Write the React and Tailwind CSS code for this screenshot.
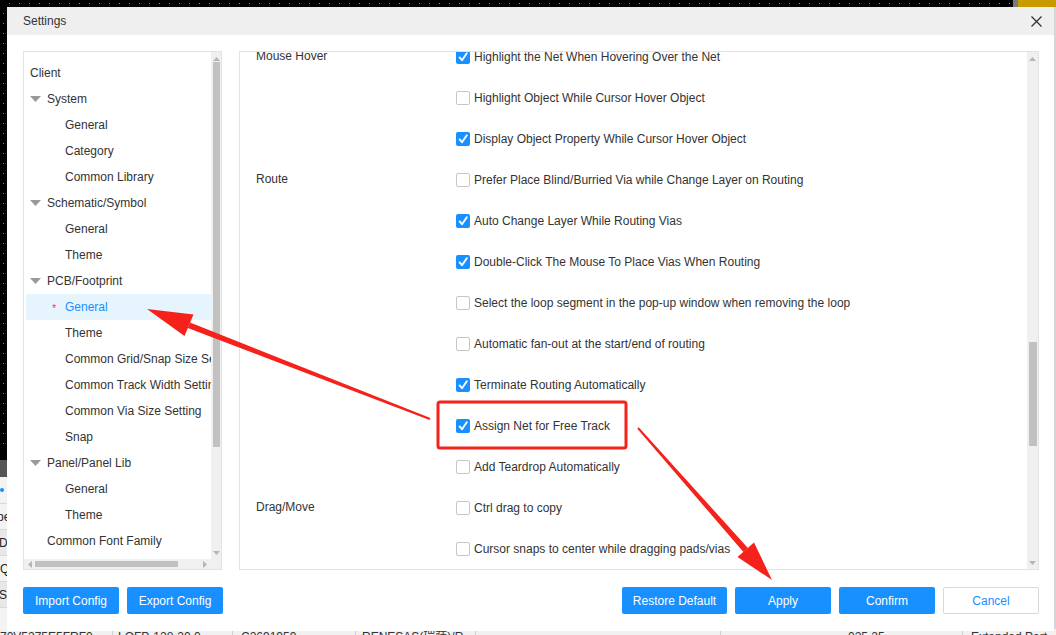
import React from 'react';

const tree = [
  { t: 'Client', kind: 'root' },
  { t: 'System', kind: 'group' },
  { t: 'General', kind: 'leaf' },
  { t: 'Category', kind: 'leaf' },
  { t: 'Common Library', kind: 'leaf' },
  { t: 'Schematic/Symbol', kind: 'group' },
  { t: 'General', kind: 'leaf' },
  { t: 'Theme', kind: 'leaf' },
  { t: 'PCB/Footprint', kind: 'group' },
  { t: 'General', kind: 'leaf', active: true },
  { t: 'Theme', kind: 'leaf' },
  { t: 'Common Grid/Snap Size Setting', kind: 'leaf' },
  { t: 'Common Track Width Setting', kind: 'leaf' },
  { t: 'Common Via Size Setting', kind: 'leaf' },
  { t: 'Snap', kind: 'leaf' },
  { t: 'Panel/Panel Lib', kind: 'group' },
  { t: 'General', kind: 'leaf' },
  { t: 'Theme', kind: 'leaf' },
  { t: 'Common Font Family', kind: 'flat' },
];

const options = [
  { label: 'Mouse Hover', text: 'Highlight the Net When Hovering Over the Net', on: true },
  { text: 'Highlight Object While Cursor Hover Object', on: false },
  { text: 'Display Object Property While Cursor Hover Object', on: true },
  { label: 'Route', text: 'Prefer Place Blind/Burried Via while Change Layer on Routing', on: false },
  { text: 'Auto Change Layer While Routing Vias', on: true },
  { text: 'Double-Click The Mouse To Place Vias When Routing', on: true },
  { text: 'Select the loop segment in the pop-up window when removing the loop', on: false },
  { text: 'Automatic fan-out at the start/end of routing', on: false },
  { text: 'Terminate Routing Automatically', on: true },
  { text: 'Assign Net for Free Track', on: true },
  { text: 'Add Teardrop Automatically', on: false },
  { label: 'Drag/Move', text: 'Ctrl drag to copy', on: false },
  { text: 'Cursor snaps to center while dragging pads/vias', on: false },
];

const Caret = () => (
  <svg width="11" height="6" viewBox="0 0 11 6" className="shrink-0">
    <polygon points="0,0 11,0 5.5,6" fill="#9a9a9a" />
  </svg>
);

const Arrow = ({ dir }) => {
  const pts = {
    up: '0,4 3.5,0 7,4',
    down: '0,0 7,0 3.5,4',
    left: '4,0 4,7 0,3.5',
    right: '0,0 0,7 4,3.5',
  }[dir];
  const w = dir === 'up' || dir === 'down' ? 7 : 4;
  const h = dir === 'up' || dir === 'down' ? 4 : 7;
  return (
    <svg width={w} height={h} viewBox={`0 0 ${w} ${h}`} className="shrink-0">
      <polygon points={pts} fill="#b5b5b5" />
    </svg>
  );
};

function CheckBox({ on }) {
  if (!on) {
    return <span className="w-[14px] h-[14px] rounded-[2px] border border-[#c6c6c6] bg-white shrink-0" />;
  }
  return (
    <span className="w-[14px] h-[14px] rounded-[2px] bg-[#1890ff] flex items-center justify-center shrink-0">
      <svg width="10" height="10" viewBox="0 0 10 10">
        <path d="M1.6 5.4 L4 8.2 L8.8 1.2" stroke="#fff" strokeWidth="1.9" fill="none" strokeLinecap="round" strokeLinejoin="round" />
      </svg>
    </span>
  );
}

function TreeRow({ item }) {
  if (item.kind === 'group') {
    return (
      <div className="h-[26px] flex items-center pl-[4px] whitespace-nowrap">
        <Caret />
        <span className="ml-[6px] shrink-0">{item.t}</span>
      </div>
    );
  }
  if (item.kind === 'root') {
    return <div className="h-[26px] flex items-center pl-[4px] whitespace-nowrap">{item.t}</div>;
  }
  if (item.kind === 'flat') {
    return <div className="h-[26px] flex items-center pl-[21px] whitespace-nowrap">{item.t}</div>;
  }
  return (
    <div className={`h-[26px] flex items-center pl-[26px] whitespace-nowrap overflow-hidden ${item.active ? 'bg-[#e6f5fd] text-[#1890ff]' : ''}`}>
      <span className="w-[13px] shrink-0 text-[#ff3b3b] text-[11px] leading-none pt-[3px]">{item.active ? '*' : ''}</span>
      <span className="shrink-0">{item.t}</span>
    </div>
  );
}

function Btn({ children, w = 'w-[96px]', ghost }) {
  return (
    <button
      className={`${w} h-[27px] rounded-[2px] text-[12px] flex items-center justify-center ${
        ghost ? 'bg-white border border-[#d9d9d9] text-[#1890ff]' : 'bg-[#1890ff] text-white'
      }`}
    >
      {children}
    </button>
  );
}

export default function App() {
  return (
    <div className="relative w-[1056px] h-[635px] overflow-hidden bg-white font-['Liberation_Sans','Noto_Sans_CJK_SC',sans-serif] text-[12px] text-[#333]">
      {/* page behind the dialog */}
      <div className="flex flex-col h-full">
        <div className="h-[7px] bg-black flex items-center">
          <div className="flex-1 flex gap-[9px] pl-[9px] overflow-hidden">
            {Array.from({ length: 101 }).map((_, i) => (
              <span key={i} className="w-[1px] h-[1px] bg-[#9a9a9a] shrink-0" />
            ))}
          </div>
          <div className="w-[5px] h-full bg-[#7a7a7a]" />
          <div className="w-[38px] h-full bg-[#c89a00]" />
        </div>
        <div className="flex-1 flex">
          <div className="w-[7px] flex flex-col">
            <div className="h-[453px] bg-black flex flex-col items-center gap-[9px] pt-[6px] overflow-hidden">
              {Array.from({ length: 44 }).map((_, i) => (
                <span key={i} className="w-[1px] h-[1px] bg-[#8a8a8a] shrink-0" />
              ))}
            </div>
            <div className="h-[17px] bg-[#555]" />
            <div className="flex-1 flex flex-col bg-[#f3f3f3] overflow-hidden text-[#222] leading-none">
              <div className="h-[26px] flex items-center"><span className="w-[4px] h-[4px] rounded-full bg-[#1890ff]" /></div>
              <div className="h-[26px] flex items-center border-t border-[#d9d9d9] -ml-[3px]">pe</div>
              <div className="h-[26px] flex items-center border-t border-[#d9d9d9] bg-[#e8e8e8] -ml-[1px]">De</div>
              <div className="h-[26px] flex items-center border-t border-[#d9d9d9]">Q</div>
              <div className="h-[26px] flex items-center border-t border-[#d9d9d9] bg-[#e8e8e8] -ml-[1px]">SI</div>
              <div className="flex-1 border-t border-[#d9d9d9]" />
            </div>
          </div>
          <div className="flex-1" />
          <div className="w-[2px] bg-[#d6d6d6]" />
        </div>
        <div className="h-[6px] flex bg-[#f1f1f1] text-[#333] leading-none overflow-hidden">
          <div className="w-[113px] border-r border-[#cfcfcf] pt-[2px] whitespace-nowrap">70V5275E5FRF0</div>
          <div className="w-[120px] border-r border-[#cfcfcf] pt-[2px] pl-[5px] whitespace-nowrap">LQFP-128-20.0 ...</div>
          <div className="w-[123px] border-r border-[#cfcfcf] pt-[2px] pl-[8px] whitespace-nowrap">C2691959</div>
          <div className="w-[120px] border-r border-[#cfcfcf] pt-[2px] pl-[6px] whitespace-nowrap">RENESAS(瑞萨)/R...</div>
          <div className="w-[245px] border-r border-[#cfcfcf]" />
          <div className="w-[242px] border-r border-[#cfcfcf] pt-[2px] pl-[127px] whitespace-nowrap">025.25</div>
          <div className="flex-1 pt-[2px] pl-[8px] whitespace-nowrap">Extended Part</div>
        </div>
      </div>

      {/* dialog */}
      <div className="absolute left-[7px] top-[7px] w-[1047px] h-[624px] bg-white flex flex-col">
        <div className="h-[28px] bg-[#efefef] flex items-center justify-between pl-4 pr-[12px]">
          <span className="text-[12px] text-[#333]">Settings</span>
          <svg width="11" height="11" viewBox="0 0 11 11">
            <path d="M0.5 0.5 L10.5 10.5 M10.5 0.5 L0.5 10.5" stroke="#333" strokeWidth="1.3" />
          </svg>
        </div>

        <div className="flex gap-[17px] pt-4 pl-4 pr-[15px]">
          {/* tree */}
          <div className="w-[199px] h-[519px] border border-[#e3e3e3] flex flex-col">
            <div className="flex-1 flex min-h-0">
              <div className="flex-1 min-w-0 overflow-hidden pt-[8px] pl-[2px]">
                {tree.map((it, i) => (
                  <TreeRow key={i} item={it} />
                ))}
              </div>
              <div className="w-[10px] bg-[#f0f0f0] flex flex-col items-center pt-[5px]">
                <Arrow dir="up" />
                <div className="w-[7px] h-[385px] bg-[#c1c1c1] mt-[1px]" />
                <div className="flex-1" />
                <Arrow dir="down" />
                <div className="h-[4px]" />
              </div>
            </div>
            <div className="h-[10px] flex">
              <div className="flex-1 bg-[#f0f0f0] flex items-center pl-[4px] pr-[4px]">
                <Arrow dir="left" />
                <div className="w-[143px] h-[6px] bg-[#c1c1c1] ml-[3px]" />
                <div className="flex-1" />
                <Arrow dir="right" />
              </div>
              <div className="w-[10px] bg-[#f0f0f0]" />
            </div>
          </div>

          {/* options */}
          <div className="flex-1 h-[519px] border border-[#e3e3e3] flex">
            <div className="flex-1 overflow-hidden">
              <div className="-mt-[16px] pl-4">
                {options.map((o, i) => (
                  <div key={i} className="h-[41px] grid grid-cols-[200px_1fr] items-center">
                    <span className="text-[#333] -mt-[2px]">{o.label || ''}</span>
                    <div className="flex items-center gap-[4px] whitespace-nowrap">
                      <CheckBox on={o.on} />
                      <span>{o.text}</span>
                    </div>
                  </div>
                ))}
              </div>
            </div>
            <div className="w-[11px] bg-[#f0f0f0] flex flex-col items-center pt-[5px]">
              <Arrow dir="up" />
              <div className="h-[281px]" />
              <div className="w-[8px] h-[104px] bg-[#c1c1c1]" />
              <div className="flex-1" />
              <Arrow dir="down" />
              <div className="h-[4px]" />
            </div>
          </div>
        </div>

        <div className="flex justify-between pt-[17px] pl-4 pr-[15px]">
          <div className="flex gap-[8px]">
            <Btn>Import Config</Btn>
            <Btn>Export Config</Btn>
          </div>
          <div className="flex gap-[8px]">
            <Btn w="w-[105px]">Restore Default</Btn>
            <Btn>Apply</Btn>
            <Btn>Confirm</Btn>
            <Btn ghost>Cancel</Btn>
          </div>
        </div>
      </div>

      {/* red annotations drawn over the screenshot */}
      <svg className="absolute left-0 top-0 pointer-events-none" width="1056" height="635" viewBox="0 0 1056 635">
        <rect x="438" y="402" width="188" height="46" rx="2" fill="none" stroke="#f5221b" strokeWidth="3" />
        <polygon points="430.4,418.1 429.6,419.9 187.8,328.1 190.0,322.5" fill="#f5221b" />
        <polygon points="147,309 193.5,314.5 184.5,336" fill="#f5221b" />
        <polygon points="637.3,428.7 638.7,427.3 747.9,548.0 743.4,552.0" fill="#f5221b" />
        <polygon points="772,580 737.5,557 754,542.5" fill="#f5221b" />
      </svg>
    </div>
  );
}
